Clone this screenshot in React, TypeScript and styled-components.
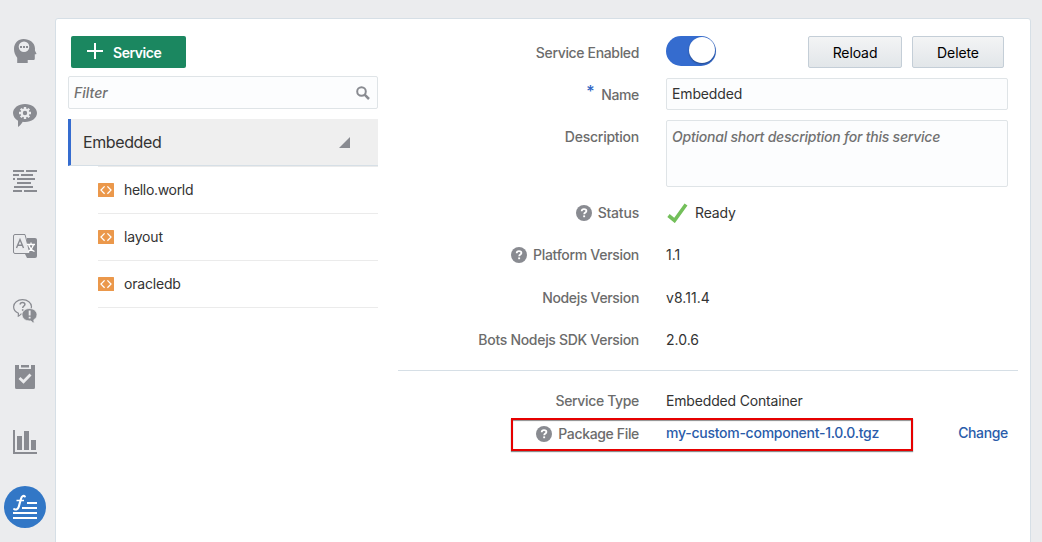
import React from "react";
import styled, { createGlobalStyle } from "styled-components";

const GlobalStyle = createGlobalStyle`
  * { box-sizing: border-box; }
  body {
    margin: 0;
    background: #ebecee;
    font-family: Inter, "Liberation Sans", sans-serif;
    font-size: 14px;
    color: #333;
  }
  button, input, textarea { font: inherit; letter-spacing: inherit; }
`;

const Page = styled.div`
  display: flex;
  height: 542px;
  overflow: hidden;
`;

const Nav = styled.nav`
  width: 50px;
  margin-right: 5px;
  display: flex;
  flex-direction: column;
  align-items: center;
`;

const NavItem = styled.a<{ $gap: number }>`
  display: block;
  margin-top: ${(p) => p.$gap}px;
  line-height: 0;
  color: #898b91;
  flex: none;
`;

const Panel = styled.main`
  width: 976px;
  height: 530px;
  margin-top: 18px;
  display: flex;
  background: #fff;
  border: 1px solid #d6dfe6;
  border-radius: 3px;
`;

const Sidebar = styled.section`
  width: 310px;
  margin-left: 12px;
  padding-top: 17px;
`;

const AddButton = styled.button`
  display: flex;
  align-items: center;
  width: 115px;
  height: 32px;
  margin: 0 0 8px 3px;
  padding: 1px 0 0 16px;
  gap: 10px;
  border: 0;
  border-radius: 2px;
  background: #1b8760;
  color: #fff;
  font-weight: 600;
  svg { margin-top: -4px; }
`;

const FilterBox = styled.div`
  display: flex;
  align-items: center;
  justify-content: space-between;
  height: 33px;
  margin-bottom: 10px;
  padding: 0 7px 0 5px;
  background: #fcfdfe;
  border: 1px solid #dfe4e7;
  border-radius: 2px;
`;

const FilterInput = styled.input`
  width: 200px;
  padding: 0;
  border: 0;
  outline: 0;
  background: transparent;
  font-style: italic;
  font-weight: 500;
  &::placeholder { color: #717171; opacity: 1; }
`;

const ServiceRow = styled.div`
  display: flex;
  align-items: center;
  justify-content: space-between;
  height: 47px;
  padding: 0 28px 0 12px;
  background: #efefef;
  border-left: 3px solid #356ccf;
  border-bottom: 1px solid #d6dfe6;
  font-size: 16px;
  letter-spacing: -0.4px;
`;

const ComponentList = styled.ul`
  list-style: none;
  margin: 0 0 0 30px;
  padding: 0;
  border-top: 1px solid #ebebeb;
`;

const ComponentItem = styled.li`
  display: flex;
  align-items: center;
  gap: 10px;
  height: 47px;
  border-bottom: 1px solid #ebebeb;
`;

const ComponentName = styled.span<{ $ls: number }>`
  padding-bottom: 2px;
  letter-spacing: ${(p) => p.$ls}px;
`;

const Details = styled.section`
  width: 620px;
  margin-left: 20px;
  padding-top: 13px;
`;

const Row = styled.div<{ $h: number; $top?: boolean }>`
  display: grid;
  grid-template-columns: 241px 342px;
  column-gap: 27px;
  height: ${(p) => p.$h}px;
  align-items: ${(p) => (p.$top ? "start" : "center")};
`;

const Label = styled.label<{ $ls?: number; $drop?: number }>`
  display: flex;
  justify-content: flex-end;
  align-items: center;
  gap: 6px;
  line-height: 18px;
  padding-top: ${(p) => p.$drop ?? 0}px;
  letter-spacing: ${(p) => p.$ls ?? -0.35}px;
  font-weight: 500;
  color: #6c6c6c;
  white-space: nowrap;
`;

const Required = styled.span`
  color: #2f66c4;
  font-size: 16px;
  line-height: 10px;
  margin: -9px 1px 0 0;
`;

const Value = styled.div<{ $ls?: number }>`
  display: flex;
  align-items: center;
  line-height: 18px;
  letter-spacing: ${(p) => p.$ls ?? 0}px;
  white-space: nowrap;
`;

const Text = styled.span<{ $ls?: number }>`
  letter-spacing: ${(p) => p.$ls ?? 0}px;
`;

const Toggle = styled.span`
  display: flex;
  justify-content: flex-end;
  width: 50px;
  height: 30px;
  padding: 1px;
  margin-top: -4px;
  border-radius: 15px;
  background: #356ccf;
`;

const Knob = styled.span`
  width: 26px;
  height: 26px;
  border-radius: 50%;
  background: #fff;
  box-shadow: 0 1px 2px rgba(0, 0, 0, 0.35);
`;

const Actions = styled.div`
  display: flex;
  gap: 10px;
  margin: -2px 4px 0 auto;
`;

const ActionButton = styled.button<{ $w: number }>`
  width: ${(p) => p.$w}px;
  height: 32px;
  padding: 1px 0 0;
  border: 1px solid #c4ced7;
  border-radius: 2px;
  background: linear-gradient(#f3f4f5, #e2e6e9);
  color: #000;
  letter-spacing: -0.1px;
`;

const NameInput = styled.input`
  width: 342px;
  height: 32px;
  margin-top: -2px;
  padding: 0 5px 2px;
  border: 1px solid #dfe4e7;
  border-radius: 2px;
  background: #fcfdfe;
  color: #333;
  letter-spacing: -0.15px;
`;

const DescriptionInput = styled.textarea`
  display: block;
  width: 342px;
  height: 67px;
  margin-top: 4px;
  padding: 7px 5px;
  line-height: 18px;
  border: 1px solid #dfe4e7;
  border-radius: 2px;
  background: #fcfdfe;
  resize: none;
  font-style: italic;
  font-weight: 500;
  letter-spacing: -0.23px;
  &::placeholder { color: #717171; opacity: 1; }
`;

const Divider = styled.hr`
  height: 1px;
  margin: 9px 0 14px;
  border: 0;
  background: #d6dfe6;
`;

const PackageRow = styled(Row)`
  position: relative;
`;

const Highlight = styled.span`
  position: absolute;
  left: 113px;
  top: 1px;
  width: 402px;
  height: 33px;
  border: 2px solid #e60000;
  box-shadow: 0 1px 1px rgba(0, 0, 0, 0.45), inset 0 1px 1px rgba(0, 0, 0, 0.45);
  pointer-events: none;
`;

const Link = styled.a<{ $push?: boolean; $ls?: number }>`
  color: #2a5caa;
  font-weight: 500;
  padding-bottom: 2px;
  letter-spacing: ${(p) => p.$ls ?? 0}px;
  margin-left: ${(p) => (p.$push ? "auto" : "0")};
`;

const CheckMark = styled.svg`
  margin-right: 7px;
`;

const HelpIcon = () => (
  <svg width="16" height="16" viewBox="0 0 16 16">
    <circle cx="8" cy="8" r="8" fill="#898b91" />
    <path d="M5.700 6.300C5.700 4.800 6.800 4.200 8 4.200c1.300 0 2.400.7 2.400 1.900 0 1.500-2.200 1.500-2.200 3.100" fill="none" stroke="#fff" strokeWidth="1.800" />
    <rect x="7.200" y="10.400" width="1.900" height="1.800" fill="#fff" />
  </svg>
);

const CodeIcon = () => (
  <svg width="16" height="14" viewBox="0 0 16 14">
    <rect width="16" height="14" rx="0.500" fill="#eb984b" />
    <path d="M6.600 3.400 3 7.100l3.600 3.700M9.400 3.400 13 7.100l-3.600 3.700" fill="none" stroke="#fff" strokeWidth="1.300" />
  </svg>
);

const HeadIcon = () => (
  <svg width="24" height="24" viewBox="0 0 24 24">
    <path fill="currentColor" d="M10.500 0C16.600 0 22 3.600 22 9.600c0 .9-.2 1.700 0 2.200l1.400 2.600c.2.500 0 .8-.5.9h-1.100v4.200c0 1-.6 1.500-1.500 1.500h-5.600v3H4.200v-5.300C2.300 16.200 1 13.500 1 10 1 4 5.200 0 10.500 0z" />
    <circle cx="11" cy="7.800" r="5.300" fill="#ebecee" />
    <path fill="currentColor" d="M7 7h2v2H7zM10 7h2v2h-2zM13 7h2v2h-2z" />
  </svg>
);

const GearBubbleIcon = () => (
  <svg width="24" height="24" viewBox="0 0 24 24">
    <path fill="currentColor" d="M12 1c6.600 0 12 3.900 12 9s-5.400 9-12 9c-.8 0-1.500 0-2.200-.2C8.500 21 6.800 22.700 5 24v-6.300C2 16 0 13.200 0 10c0-5.100 5.400-9 12-9z" />
    <circle cx="12" cy="10" r="3.300" fill="none" stroke="#ebecee" strokeWidth="2.200" />
    <path stroke="#ebecee" strokeWidth="2.400" d="M12 4v2.500M12 13.500V16M6 10h2.500M15.500 10H18M7.760 5.760l1.700 1.700M14.500 12.500l1.740 1.740M16.240 5.760l-1.700 1.700M9.500 12.500l-1.740 1.740" />
  </svg>
);

const LinesIcon = () => (
  <svg width="24" height="24" viewBox="0 0 24 24">
    <path fill="currentColor" d="M0 1h11v2H0zM13 1h11v2H13zM0 5h6v2H0zM8 5h12v2H8zM0 9h2v2H0zM4 9h18v2H4zM4 13h14v2H4zM1 17h19v2H1zM0 21h9v2H0zM11 21h13v2H11z" />
  </svg>
);

const TranslateIcon = () => (
  <svg width="24" height="24" viewBox="0 0 24 24">
    <path fill="currentColor" d="M14 4h8a2 2 0 0 1 2 2v16a2 2 0 0 1-2 2h-8l-2-4z" />
    <path fill="#ebecee" stroke="currentColor" strokeWidth="1" d="M2 .5h10l5 19H2A1.500 1.500 0 0 1 .5 18V2A1.500 1.500 0 0 1 2 .5z" />
    <path fill="none" stroke="currentColor" strokeWidth="1.400" d="M3.500 14 7 5.500 10.500 14M4.700 11.200h4.600" />
    <path fill="none" stroke="#fff" strokeWidth="1.300" d="M14 10.500h8M18 8.500v2M15.700 10.500c.8 3.500 3.300 6 5.800 7M20.500 10.500c-1 3.500-3 6-5.500 7" />
  </svg>
);

const ChatIcon = () => (
  <svg width="24" height="24" viewBox="0 0 24 24">
    <path fill="#ebecee" stroke="currentColor" strokeWidth="1.200" d="M9.500.7c5 0 9 3 9 7.100s-4 7.200-9 7.200H8c-.8 1-1.700 1.800-2.700 2.200l.1-3C2.500 13 .6 10.600.6 7.800c0-4.100 4-7.100 8.900-7.100z" />
    <path fill="none" stroke="currentColor" strokeWidth="1.500" d="M7.200 5.500c0-1.400 1-2.100 2.300-2.100s2.400.7 2.400 2c0 1.600-2.200 1.700-2.200 3.600" />
    <path fill="currentColor" d="M8.900 10.200h1.600v1.600H8.900z" />
    <path fill="currentColor" stroke="#ebecee" strokeWidth=".8" d="M16.500 9.500c4.200 0 7.500 2.700 7.500 6.200 0 2.200-1.300 4-3.200 5.100l.4 3.400c-1.500-.5-2.500-1.300-3.300-2.300h-1.400c-4.200 0-7.500-2.700-7.500-6.200s3.300-6.200 7.500-6.200z" />
    <path fill="#ebecee" d="M15.700 11.500h1.900v5h-1.900zM15.700 17.700h1.900v1.900h-1.900z" />
  </svg>
);

const ClipboardIcon = () => (
  <svg width="24" height="24" viewBox="0 0 24 24">
    <path fill="currentColor" d="M2 0h4v4h12V0h4v22.500a1.500 1.500 0 0 1-1.500 1.500h-17A1.500 1.500 0 0 1 2 22.500zM8 0h8v2.500H8z" />
    <path fill="none" stroke="#ebecee" strokeWidth="2.800" d="m6.500 13 4 3.800L17.500 9.500" />
  </svg>
);

const ChartIcon = () => (
  <svg width="24" height="24" viewBox="0 0 24 24">
    <path fill="currentColor" d="M0 0h2v22h22v2H0zM4 6h5v14H4zM11 1h5v19h-5zM18 10h5v10h-5z" />
  </svg>
);

const FunctionIcon = () => (
  <svg width="42" height="42" viewBox="0 0 42 42">
    <circle cx="21" cy="21" r="21" fill="#3277c6" />
    <path fill="none" stroke="#fff" strokeWidth="2.100" strokeLinecap="round" d="M20.800 10.500c-1.200-1.300-3.100-.4-3.800 2.300l-2.200 7.800c-.6 2.200-2.500 3.700-4.600 2.500" />
    <path fill="#fff" d="M12.500 13.700h7.500v1.500h-7.500zM23 16h10v2H23zM18 21h15v2H18zM9 26h24v2H9zM9 31h24v2H9z" />
  </svg>
);

const navIcons = [
  { id: "intents", gap: 39, Icon: HeadIcon },
  { id: "settings", gap: 40, Icon: GearBubbleIcon },
  { id: "flows", gap: 42, Icon: LinesIcon },
  { id: "resources", gap: 41, Icon: TranslateIcon },
  { id: "qna", gap: 41, Icon: ChatIcon },
  { id: "quality", gap: 42, Icon: ClipboardIcon },
  { id: "insights", gap: 41, Icon: ChartIcon },
  { id: "components", gap: 32, Icon: FunctionIcon },
];

const components = [
  { name: "hello.world", ls: -0.32 },
  { name: "layout", ls: -0.18 },
  { name: "oracledb", ls: -0.2 },
];

export default function App() {
  return (
    <>
      <GlobalStyle />
      <Page>
        <Nav>
          {navIcons.map(({ id, gap, Icon }) => (
            <NavItem key={id} $gap={gap}>
              <Icon />
            </NavItem>
          ))}
        </Nav>
        <Panel>
          <Sidebar>
            <AddButton>
              <svg width="16" height="16" viewBox="0 0 16 16">
                <path d="M8 0v16M0 8h16" stroke="#fff" strokeWidth="2" />
              </svg>
              <Text $ls={-0.45}>Service</Text>
            </AddButton>
            <FilterBox>
              <FilterInput placeholder="Filter" />
              <svg width="14" height="14" viewBox="0 0 14 14">
                <circle cx="5.500" cy="5.500" r="4.300" fill="none" stroke="#898b91" strokeWidth="2" />
                <path d="m8.600 8.600 4.400 4.400" stroke="#898b91" strokeWidth="2.500" />
              </svg>
            </FilterBox>
            <ServiceRow>
              Embedded
              <svg width="11" height="11" viewBox="0 0 11 11">
                <path d="M11 0v11H0z" fill="#898b91" />
              </svg>
            </ServiceRow>
            <ComponentList>
              {components.map((c) => (
                <ComponentItem key={c.name}>
                  <CodeIcon />
                  <ComponentName $ls={c.ls}>{c.name}</ComponentName>
                </ComponentItem>
              ))}
            </ComponentList>
          </Sidebar>
          <Details>
            <Row $h={42}>
              <Label>Service Enabled</Label>
              <Value>
                <Toggle>
                  <Knob />
                </Toggle>
                <Actions>
                  <ActionButton $w={94}>Reload</ActionButton>
                  <ActionButton $w={92}>Delete</ActionButton>
                </Actions>
              </Value>
            </Row>
            <Row $h={42}>
              <Label>
                <Required>*</Required>Name
              </Label>
              <NameInput defaultValue="Embedded" />
            </Row>
            <Row $h={76} $top>
              <Label $drop={12} $ls={-0.25}>Description</Label>
              <DescriptionInput placeholder="Optional short description for this service" />
            </Row>
            <Row $h={42}>
              <Label $ls={-0.2}>
                <HelpIcon />
                Status
              </Label>
              <Value>
                <CheckMark width="22" height="20" viewBox="0 0 22 20">
                  <path d="m2.500 12.500 6 5L20 1.500" fill="none" stroke="#73bf5a" strokeWidth="3.600" />
                </CheckMark>
                <Text $ls={-0.15}>Ready</Text>
              </Value>
            </Row>
            <Row $h={42}>
              <Label $ls={-0.3}>
                <HelpIcon />
                Platform Version
              </Label>
              <Value>1.1</Value>
            </Row>
            <Row $h={43}>
              <Label $ls={-0.33}>Nodejs Version</Label>
              <Value $ls={0.05}>v8.11.4</Value>
            </Row>
            <Row $h={42}>
              <Label $ls={-0.3}>Bots Nodejs SDK Version</Label>
              <Value>2.0.6</Value>
            </Row>
            <Divider />
            <Row $h={32}>
              <Label>Service Type</Label>
              <Value $ls={-0.17}>Embedded Container</Value>
            </Row>
            <PackageRow $h={34}>
              <Label>
                <HelpIcon />
                Package File
              </Label>
              <Value>
                <Link $ls={-0.26}>my-custom-component-1.0.0.tgz</Link>
                <Link $push $ls={-0.35}>Change</Link>
              </Value>
              <Highlight />
            </PackageRow>
          </Details>
        </Panel>
      </Page>
    </>
  );
}
